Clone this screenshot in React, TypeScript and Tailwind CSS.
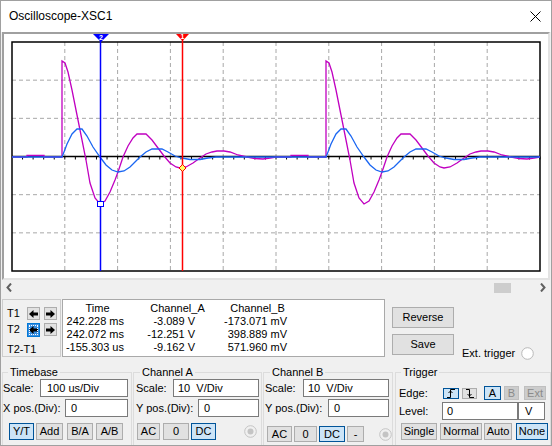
import React from "react";

type P = [number, number];

// channel B (magenta) – one period, page coordinates
const MAG: P[] = [
  [12, 157], [27, 157], [27, 155.5], [44, 155.5], [44, 157], [62, 157], [62, 61], [65, 63], [68, 72],
  [72, 90], [77, 115], [82, 140], [86, 160], [90, 183], [95, 198], [100, 204], [105, 201],
  [110, 192], [115, 180], [118, 172], [123, 157], [128, 146], [133, 138], [137, 134], [146, 134],
  [152, 140], [158, 148], [164, 156], [170, 163], [176, 167], [180, 168], [186, 167], [193, 163],
  [200, 158], [206, 154], [212, 152], [217, 151], [224, 151], [230, 152], [238, 155], [247, 157],
  [255, 158.5], [263, 159], [270, 158], [276, 157],
];

// channel A (blue)
const BLU: P[] = [
  [12, 157], [62, 157], [64, 152], [67, 144], [72, 134], [77, 129], [82, 129], [87, 136], [93, 147],
  [100, 157], [106, 165], [112, 170], [118, 172], [124, 171], [130, 167], [135, 162], [140, 157],
  [146, 152], [152, 149], [162, 149], [168, 152], [175, 156], [182, 158], [190, 159.5], [200, 159.5],
  [208, 158], [216, 157], [276, 157],
];

const SHIFT = 264;

function pts(p: P[]) {
  const all = [...p, ...p.map(([x, y]) => [x + SHIFT, y] as P)];
  return all.map(([x, y]) => `${x},${y}`).join(" ");
}

const DIV_X = 52.8;
const DIV_Y = 38.17;

function Screen() {
  const vx = [1, 2, 3, 4, 5, 6, 7, 8, 9].map((i) => 12 + i * DIV_X);
  const hy = [1, 2, 4, 5].map((j) => 42 + j * DIV_Y);
  const ticks = Array.from({ length: 50 }, (_, i) => 12 + (i + 1) * 10.56);
  return (
    <svg width="544" height="244" viewBox="4 34 544 244" className="block">
      {vx.map((x) => (
        <line key={x} x1={x} y1={42} x2={x} y2={271} stroke="#a8a8a8" strokeWidth="1" strokeDasharray="4 3" />
      ))}
      {hy.map((y) => (
        <line key={y} x1={12} y1={y} x2={540} y2={y} stroke="#a8a8a8" strokeWidth="1" strokeDasharray="4 3" />
      ))}
      <rect x="12" y="42" width="528" height="229" fill="none" stroke="#000" strokeWidth="1.5" />
      <line x1="12" y1="156.5" x2="540" y2="156.5" stroke="#000" strokeWidth="1.5" />
      {ticks.map((x) => (
        <line key={x} x1={x} y1={156.5} x2={x} y2={159.5} stroke="#000" strokeWidth="1" />
      ))}
      <polyline points={pts(MAG)} fill="none" stroke="#c000c0" strokeWidth="1.3" />
      <polyline points={pts(BLU)} fill="none" stroke="#1a66f2" strokeWidth="1.3" />
      {/* cursors */}
      <line x1="100.5" y1="40" x2="100.5" y2="271" stroke="#0000ff" strokeWidth="1.5" />
      <line x1="182.5" y1="40" x2="182.5" y2="271" stroke="#ff0000" strokeWidth="1.5" />
      <polygon points="93,34 109,34 101,42" fill="#0000ff" />
      <text x="101" y="39.5" fontSize="7" fontWeight="bold" fill="#fff" textAnchor="middle" fontFamily="Liberation Sans, Arial, sans-serif">2</text>
      <polygon points="176,34 189,34 182.5,41" fill="#ff0000" />
      <text x="182.5" y="39" fontSize="7" fontWeight="bold" fill="#fff" textAnchor="middle" fontFamily="Liberation Sans, Arial, sans-serif">1</text>
      <rect x="97.5" y="201.5" width="6" height="5" fill="#fff" stroke="#0000ff" strokeWidth="1" />
      <polygon points="182.5,164.5 186,168 182.5,171.5 179,168" fill="#ffff66" stroke="#ff0000" strokeWidth="1" />
    </svg>
  );
}

function Btn({
  className,
  v = "n",
  children,
}: {
  className: string;
  v?: "n" | "sel" | "dis";
  children: React.ReactNode;
}) {
  const look =
    v === "sel"
      ? "bg-[#cce4f7] border-[#005499]"
      : v === "dis"
        ? "bg-[#cccccc] border-[#bfbfbf] text-[#8a8a8a]"
        : "bg-[#e1e1e1] border-[#adadad]";
  return (
    <div className={`flex shrink-0 items-center justify-center border ${look} ${className}`}>
      {children}
    </div>
  );
}

function Field({ className, children }: { className: string; children: React.ReactNode }) {
  return (
    <div className={`flex h-[18px] shrink-0 items-center whitespace-pre border border-[#7a7a7a] bg-white ${className}`}>
      {children}
    </div>
  );
}

function Arrow({ dir }: { dir: "l" | "r" }) {
  return (
    <svg width="9" height="8" viewBox="0 0 9 8">
      {dir === "l" ? (
        <path d="M0 4L4.5 0V2.5H9V5.5H4.5V8Z" fill="#000" />
      ) : (
        <path d="M9 4L4.5 0V2.5H0V5.5H4.5V8Z" fill="#000" />
      )}
    </svg>
  );
}

function Radio({ disabled }: { disabled?: boolean }) {
  return disabled ? (
    <svg width="13" height="13" viewBox="0 0 13 13" className="shrink-0">
      <circle cx="6.5" cy="6.5" r="5.8" fill="#f0f0f0" stroke="#c4c4c4" />
      <circle cx="6.5" cy="6.5" r="3" fill="#c4c4c4" />
    </svg>
  ) : (
    <svg width="13" height="13" viewBox="0 0 13 13" className="shrink-0">
      <circle cx="6.5" cy="6.5" r="5.8" fill="#fff" stroke="#b8b8b8" />
    </svg>
  );
}

export default function App() {
  return (
    <div className="flex h-[446px] w-[552px] flex-col overflow-hidden border border-[#a0a0a0] bg-[#f0f0f0] font-['Liberation_Sans',Arial,sans-serif] text-[11px] leading-[13px] text-black">
      {/* title bar */}
      <div className="flex h-[31px] shrink-0 items-center justify-between bg-white pl-[8px] pr-[10px]">
        <span className="text-[12px]">Oscilloscope-XSC1</span>
        <svg width="11" height="11" viewBox="0 0 11 11">
          <path d="M0.5 0.5L10.5 10.5M10.5 0.5L0.5 10.5" stroke="#000" strokeWidth="1" />
        </svg>
      </div>

      {/* screen */}
      <div className="ml-[1px] h-[248px] w-[548px] shrink-0 border-2 border-t-[#a0a0a0] border-l-[#a0a0a0] border-r-[#e3e3e3] border-b-[#e3e3e3] bg-white">
        <Screen />
      </div>

      {/* scroll bar */}
      <div className="flex h-[15px] shrink-0 items-center pl-[5px] pr-[5px]">
        <svg width="6" height="9" viewBox="0 0 6 9">
          <path d="M5 0.5L1.5 4.5L5 8.5" fill="none" stroke="#606060" strokeWidth="2" />
        </svg>
        <div className="ml-auto h-[10px] w-[17px] bg-[#cdcdcd]" />
        <svg width="6" height="9" viewBox="0 0 6 9" className="ml-[29px]">
          <path d="M1 0.5L4.5 4.5L1 8.5" fill="none" stroke="#606060" strokeWidth="2" />
        </svg>
      </div>

      {/* readout */}
      <div className="mt-[4px] flex h-[62px] shrink-0">
        <div className="ml-[1px] h-[58px] w-[59px] border border-[#cdcdcd] pl-[4px] pt-[7px]">
          <div className="flex h-[13px] items-center">
            <span className="w-[20px]">T1</span>
            <Btn className="h-[13px] w-[13px]">
              <Arrow dir="l" />
            </Btn>
            <Btn className="ml-[4px] h-[13px] w-[13px]">
              <Arrow dir="r" />
            </Btn>
          </div>
          <div className="mt-[3px] flex h-[13px] items-center">
            <span className="w-[20px]">T2</span>
            <div className="flex h-[14px] w-[13px] items-center justify-center border border-[#0078d7] bg-[#3b8fe0] outline-1 outline-dotted outline-offset-[-3px] outline-white">
              <Arrow dir="l" />
            </div>
            <Btn className="ml-[4px] h-[13px] w-[13px]">
              <Arrow dir="r" />
            </Btn>
          </div>
          <div className="mt-[7px] h-[13px]">T2-T1</div>
        </div>

        <div className="ml-[1px] h-[58px] w-[323px] border border-[#a9a9a9] bg-white pt-[2px]">
          <div className="flex">
            <span className="w-[69px] text-center">Time</span>
            <span className="w-[91px] text-center">Channel_A</span>
            <span className="w-[69px] text-center">Channel_B</span>
          </div>
          {[
            ["242.228 ms", "-3.089 V", "-173.071 mV"],
            ["242.072 ms", "-12.251 V", "398.889 mV"],
            ["-155.303 us", "-9.162 V", "571.960 mV"],
          ].map((r) => (
            <div key={r[0]} className="flex">
              <span className="w-[61px] text-right">{r[0]}</span>
              <span className="w-[71px] text-right">{r[1]}</span>
              <span className="w-[92px] text-right">{r[2]}</span>
            </div>
          ))}
        </div>

        <div className="ml-[7px] flex w-[62px] flex-col">
          <Btn className="mt-[8px] h-[21px] w-[62px]">Reverse</Btn>
          <Btn className="mt-[6px] h-[21px] w-[62px]">Save</Btn>
        </div>

        <div className="mb-[1px] ml-[8px] flex h-[13px] items-center gap-[6px] self-end">
          <span>Ext. trigger</span>
          <Radio />
        </div>
      </div>

      {/* control groups */}
      <div className="mt-[5px] flex flex-1 items-start">
        <fieldset className="ml-[1px] h-[90px] w-[130px] shrink-0 border border-[#dcdcdc]">
          <legend className="ml-[5px] px-[2px]">Timebase</legend>
          <div className="flex h-[18px] items-center">
            <span className="w-[37px]">Scale:</span>
            <Field className="w-[88px] pl-[6px]">100 us/Div</Field>
          </div>
          <div className="mt-[2px] flex h-[18px] items-center">
            <span className="w-[62px]">X pos.(Div):</span>
            <Field className="w-[63px] pl-[5px]">0</Field>
          </div>
          <div className="mt-[6px] flex h-[17px] items-center pl-[6px]">
            <Btn v="sel" className="h-[17px] w-[25px]">Y/T</Btn>
            <Btn className="ml-[2px] h-[17px] w-[27px]">Add</Btn>
            <Btn className="ml-[4px] h-[17px] w-[26px]">B/A</Btn>
            <Btn className="ml-[3px] h-[17px] w-[27px]">A/B</Btn>
          </div>
        </fieldset>

        <fieldset className="ml-[1px] h-[90px] w-[129px] shrink-0 border border-[#dcdcdc]">
          <legend className="ml-[6px] px-[2px]">Channel A</legend>
          <div className="flex h-[18px] items-center pl-[2px]">
            <span className="w-[37px]">Scale:</span>
            <Field className="w-[86px] pl-[4px]">10  V/Div</Field>
          </div>
          <div className="mt-[2px] flex h-[18px] items-center pl-[2px]">
            <span className="w-[62px]">Y pos.(Div):</span>
            <Field className="w-[61px] pl-[5px]">0</Field>
          </div>
          <div className="mt-[6px] flex h-[17px] items-center pl-[3px]">
            <Btn className="h-[17px] w-[23px]">AC</Btn>
            <Btn className="ml-[3px] h-[17px] w-[26px]">0</Btn>
            <Btn v="sel" className="ml-[2px] h-[17px] w-[25px]">DC</Btn>
            <div className="ml-[28px]">
              <Radio disabled />
            </div>
          </div>
        </fieldset>

        <fieldset className="ml-[1px] h-[90px] w-[128px] shrink-0 border border-[#dcdcdc]">
          <legend className="ml-[6px] px-[2px]">Channel B</legend>
          <div className="flex h-[18px] items-center pl-[1px]">
            <span className="w-[38px]">Scale:</span>
            <Field className="w-[86px] pl-[4px]">10  V/Div</Field>
          </div>
          <div className="mt-[2px] flex h-[18px] items-center pl-[1px]">
            <span className="w-[63px]">Y pos.(Div):</span>
            <Field className="w-[61px] pl-[5px]">0</Field>
          </div>
          <div className="mt-[9px] flex h-[16px] items-center pl-[3px]">
            <Btn className="h-[16px] w-[25px]">AC</Btn>
            <Btn className="ml-[2px] h-[16px] w-[23px]">0</Btn>
            <Btn v="sel" className="ml-[2px] h-[16px] w-[26px]">DC</Btn>
            <Btn className="ml-[2px] h-[16px] w-[17px]">-</Btn>
            <div className="ml-[15px]">
              <Radio disabled />
            </div>
          </div>
        </fieldset>

        <fieldset className="ml-[2px] h-[90px] w-[156px] shrink-0 border border-[#dcdcdc]">
          <legend className="ml-[5px] px-[2px]">Trigger</legend>
          <div className="mt-[7px] flex h-[14px] items-center pl-[3px]">
            <span className="w-[44px]">Edge:</span>
            <Btn v="sel" className="h-[11px] w-[16px]">
              <svg width="10" height="9" viewBox="0 0 10 9">
                <path d="M1 8.5H4.5V0.5H9" fill="none" stroke="#000" strokeWidth="1" />
                <path d="M2.5 4L4.5 2L6.5 4" fill="none" stroke="#000" strokeWidth="1" />
              </svg>
            </Btn>
            <Btn className="ml-[3px] h-[11px] w-[15px]">
              <svg width="10" height="9" viewBox="0 0 10 9">
                <path d="M1 0.5H4.5V8.5H9" fill="none" stroke="#000" strokeWidth="1" />
                <path d="M2.5 5L4.5 7L6.5 5" fill="none" stroke="#000" strokeWidth="1" />
              </svg>
            </Btn>
            <Btn v="sel" className="ml-[7px] h-[14px] w-[17px]">A</Btn>
            <Btn v="dis" className="ml-[3px] h-[14px] w-[15px]">B</Btn>
            <Btn v="dis" className="ml-[5px] h-[14px] w-[22px]">Ext</Btn>
          </div>
          <div className="mt-[3px] flex h-[16px] items-center pl-[3px]">
            <span className="w-[43px]">Level:</span>
            <Field className="h-[16px] w-[76px] pl-[4px]">0</Field>
            <Field className="h-[16px] w-[27px] pl-[6px]">V</Field>
          </div>
          <div className="mt-[4px] flex h-[17px] items-center pl-[5px]">
            <Btn className="h-[17px] w-[36px]">Single</Btn>
            <Btn className="ml-[3px] h-[17px] w-[42px]">Normal</Btn>
            <Btn className="ml-[2px] h-[17px] w-[28px]">Auto</Btn>
            <Btn v="sel" className="ml-[4px] h-[17px] w-[32px]">None</Btn>
          </div>
        </fieldset>
      </div>
    </div>
  );
}
